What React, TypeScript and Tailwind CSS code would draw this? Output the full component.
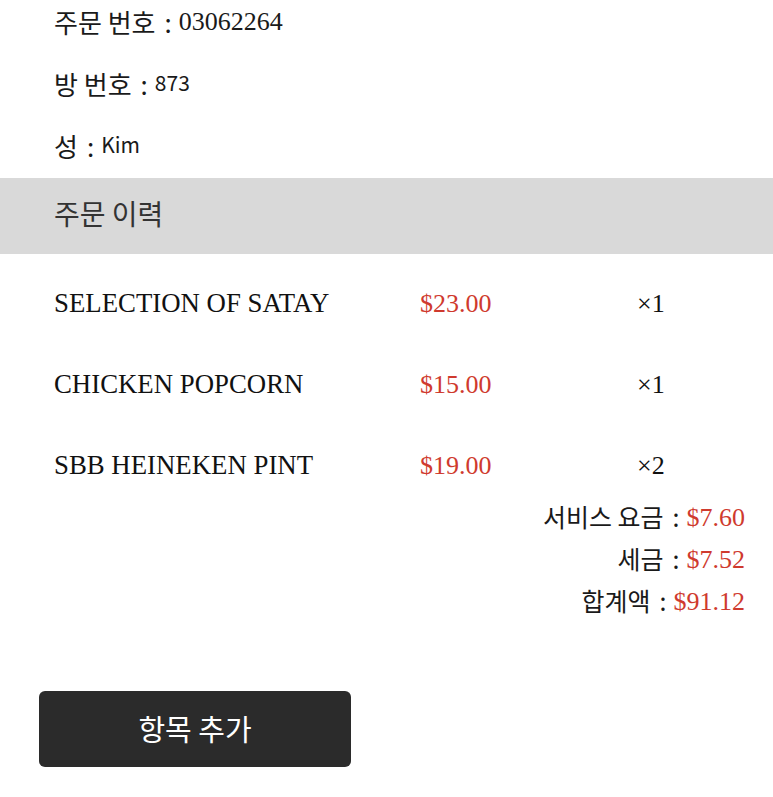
const sans = "font-['Noto_Sans_CJK_KR','Noto_Sans',sans-serif]";
const serif = "font-['Liberation_Serif','Times_New_Roman',serif]";

const info = [
  { label: '주문 번호', value: '03062264', serifValue: true },
  { label: '방 번호', value: '873', serifValue: false },
  { label: '성', value: 'Kim', serifValue: false },
];

const items = [
  { name: 'SELECTION OF SATAY', price: '$23.00', qty: 1 },
  { name: 'CHICKEN POPCORN', price: '$15.00', qty: 1 },
  { name: 'SBB HEINEKEN PINT', price: '$19.00', qty: 2 },
];

const summary = [
  { label: '서비스 요금', value: '$7.60' },
  { label: '세금', value: '$7.52' },
  { label: '합계액', value: '$91.12' },
];

function Colon() {
  return <span className="ml-[9px] mr-[7px]">:</span>;
}

export default function App() {
  return (
    <div className="w-[773px] h-[797px] overflow-hidden bg-white text-[#1a1a1a]">
      {/* Order info */}
      <div className="-mt-[10px] px-[54px]">
        {info.map((row) => (
          <div key={row.label} className="h-[62px] flex items-center whitespace-pre">
            <span className={`${sans} text-[26px]`}>
              {row.label}
              <Colon />
            </span>
            {row.serifValue ? (
              <span className={`${serif} text-[26px]`}>{row.value}</span>
            ) : (
              <span className={`${sans} text-[21px]`}>{row.value}</span>
            )}
          </div>
        ))}
      </div>

      {/* Section header */}
      <div className="mt-[2px] h-[76px] bg-[#d9d9d9] flex items-center px-[54px]">
        <span className={`${sans} text-[28px] leading-none -mt-[6px] text-[#333]`}>주문 이력</span>
      </div>

      {/* Items */}
      <div className="pt-[18px] px-[54px] flex flex-col gap-[19px]">
        {items.map((it) => (
          <div key={it.name} className={`${serif} h-[62px] grid grid-cols-[366px_217px_1fr] items-center`}>
            <span className="text-[26.8px] text-[#111]">{it.name}</span>
            <span className="text-[26px] text-[#cf3a2e]">{it.price}</span>
            <span className="text-[26px] text-[#111]">×{it.qty}</span>
          </div>
        ))}
      </div>

      {/* Summary */}
      <div className="pr-[28px] flex flex-col items-end">
        {summary.map((s) => (
          <div key={s.label} className="h-[42px] flex items-center whitespace-pre">
            <span className={`${sans} text-[25px] text-[#1a1a1a]`}>
              {s.label}
              <Colon />
            </span>
            <span className={`${serif} text-[26px] text-[#cf3a2e]`}>{s.value}</span>
          </div>
        ))}
      </div>

      {/* Add item button */}
      <div className="mt-[69px] pl-[39px]">
        <button className={`${sans} w-[312px] h-[76px] rounded-md bg-[#2b2b2b] text-white text-[29px] flex items-center justify-center`}>
          항목 추가
        </button>
      </div>
    </div>
  );
}
